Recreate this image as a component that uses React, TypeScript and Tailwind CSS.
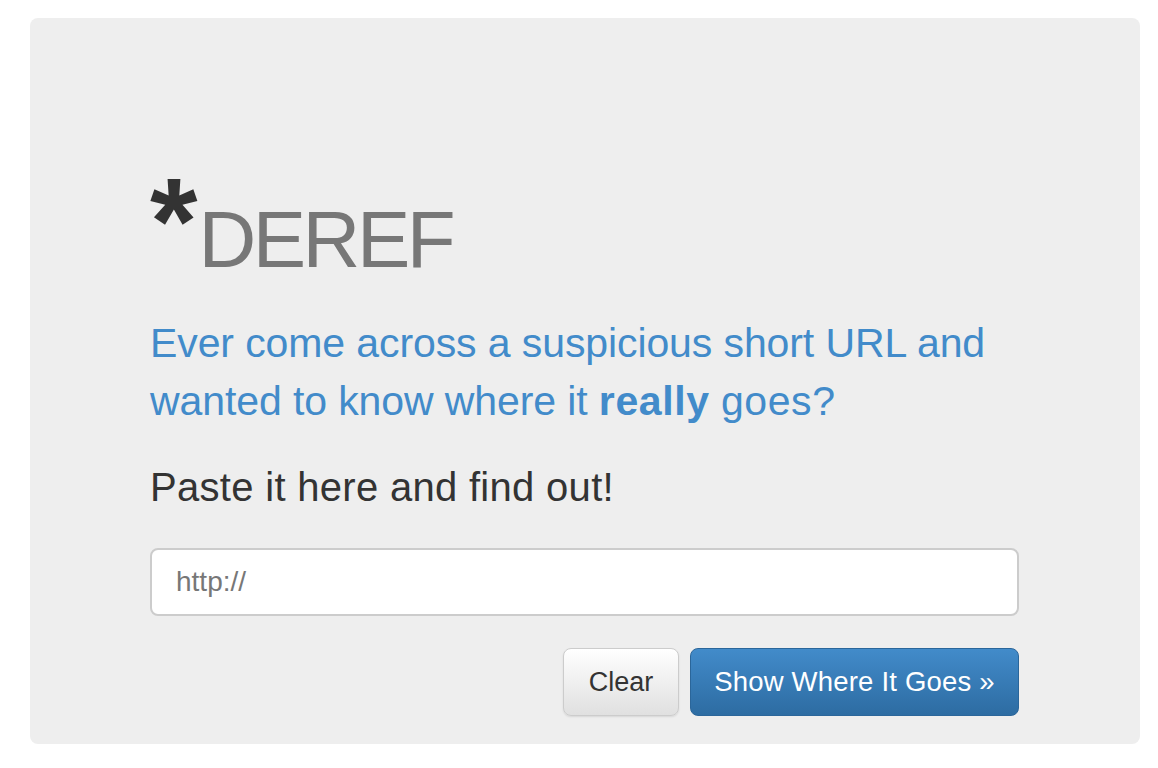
import React from "react";

export default function App() {
  return (
    <div className="min-h-[768px] w-[1158px] bg-white pt-[18px] pl-[30px]" style={{ fontFamily: '"Liberation Sans", Arial, sans-serif' }}>
      <div className="w-[1110px] h-[726px] rounded-[8px] bg-[#eeeeee] pl-[120px] pr-[121px] pt-[160px]">
        <h1 className="flex items-start leading-none h-[100px]">
          <span className="text-[#333333] font-bold text-[122px] leading-none mt-[-18px] mr-[1px]">*</span>
          <span className="text-[#777777] text-[80px] leading-none tracking-[-3.5px] mt-[22px]">DEREF</span>
        </h1>
        <p className="mt-[36px] text-[#428bca] text-[41px] leading-[58px] tracking-[-0.1px]">
          Ever come across a suspicious short URL and wanted to know where it <strong className="font-bold tracking-[0.6px]">really</strong> <span className="tracking-[0.6px]">goes?</span>
        </p>
        <p className="mt-[29px] text-[#333333] text-[40px] leading-[56px] tracking-[0.3px]">Paste it here and find out!</p>
        <div className="mt-[33px] h-[68px] rounded-[8px] border-2 border-[#cccccc] bg-white flex items-center pl-[24px]">
          <span className="text-[#777777] text-[28px]">http://</span>
        </div>
        <div className="mt-[32px] flex justify-end gap-[11px]">
          <button className="h-[68px] w-[116px] rounded-[8px] border border-[#cccccc] bg-gradient-to-b from-white to-[#e0e0e0] text-[#333333] text-[27px] shadow-[0_1px_2px_rgba(0,0,0,0.1)]">Clear</button>
          <button className="h-[68px] w-[329px] rounded-[8px] border border-[#2b669a] bg-gradient-to-b from-[#428bca] to-[#2d6ca2] text-white text-[27.5px] tracking-[0.2px]">Show Where It Goes »</button>
        </div>
      </div>
    </div>
  );
}
